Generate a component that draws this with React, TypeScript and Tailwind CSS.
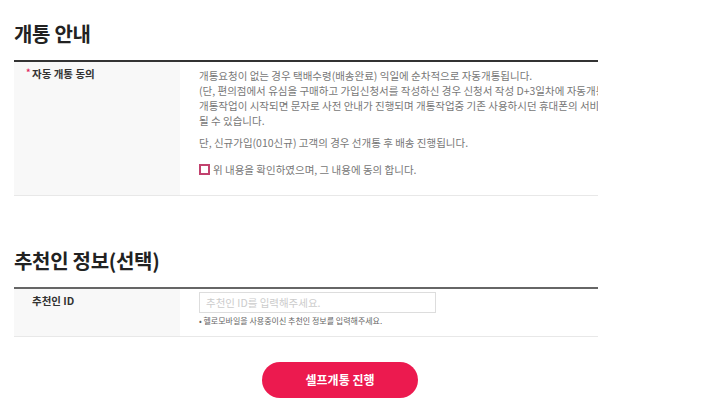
export default function App() {
    return (
        <div className="w-[722px] h-[420px] overflow-hidden bg-white font-['Noto_Sans_CJK_KR','Noto_Sans',sans-serif]">
            <div className="w-[652px] ml-[14px]">
                {/* 개통 안내 */}
                <div className="w-[584px] overflow-hidden">
                    <h2 className="pt-[21px] text-[20px] leading-[26px] font-bold text-[#222] tracking-[-0.3px]">
                        개통 안내
                    </h2>
                    <div className="mt-[13px] flex border-t-2 border-b border-t-[#333] border-b-[#e8e8e8]">
                        <div className="w-[166px] shrink-0 bg-[#f8f8f8] pl-[18px] pt-[4px]">
                            <div className="relative text-[10.5px] leading-[15px] font-bold text-[#333]">
                                <span className="absolute -left-[6px] -top-[1px] text-[9px] text-[#e0245e]">*</span>
                                자동 개통 동의
                            </div>
                        </div>
                        <div className="pl-[19px] pt-[6px] pb-[18px] text-[10.5px] leading-[15px] text-[#777] whitespace-nowrap">
                            <p>
                                개통요청이 없는 경우 택배수령(배송완료) 익일에 순차적으로 자동개통됩니다.
                                <br />
                                (단, 편의점에서 유심을 구매하고 가입신청서를 작성하신 경우 신청서 작성 D+3일차에 자동개통됩니다.)
                                <br />
                                개통작업이 시작되면 문자로 사전 안내가 진행되며 개통작업중 기존 사용하시던 휴대폰의 서비스가 일시 중지
                                <br />
                                될 수 있습니다.
                            </p>
                            <p className="mt-[7px]">단, 신규가입(010신규) 고객의 경우 선개통 후 배송 진행됩니다.</p>
                            <label className="mt-[12px] flex items-center gap-[3px]">
                                <span className="w-[11px] h-[11px] border-2 border-[#c2426e] bg-white" />
                                위 내용을 확인하였으며, 그 내용에 동의 합니다.
                            </label>
                        </div>
                    </div>
                </div>

                {/* 추천인 정보 */}
                <div className="w-[584px] overflow-hidden">
                    <h2 className="mt-[52px] text-[20px] leading-[26px] font-bold text-[#222] tracking-[-0.3px]">
                        추천인 정보(선택)
                    </h2>
                    <div className="mt-[13px] flex border-t-2 border-b border-t-[#666] border-b-[#e8e8e8]">
                        <div className="w-[166px] shrink-0 bg-[#f8f8f8] pl-[18px] pt-[4px]">
                            <div className="text-[10.5px] leading-[15px] font-bold text-[#333]">추천인 ID</div>
                        </div>
                        <div className="pl-[19px] pt-[3px] pb-[10px]">
                            <input
                                type="text"
                                placeholder="추천인 ID를 입력해주세요."
                                className="block w-[237px] h-[21px] border border-[#ddd] px-[6px] text-[10.5px] text-[#333] placeholder:text-[#ccc] outline-none"
                            />
                            <p className="mt-[3px] text-[8px] leading-[10px] text-[#666]">
                                • 헬로모바일을 사용중이신 추천인 정보를 입력해주세요.
                            </p>
                        </div>
                    </div>
                </div>

                <div className="mt-[25px] flex justify-center">
                    <button className="w-[156px] h-[36px] rounded-full bg-[#ec1a4f] text-white text-[12px] font-bold">
                        셀프개통 진행
                    </button>
                </div>
            </div>
        </div>
    );
}
